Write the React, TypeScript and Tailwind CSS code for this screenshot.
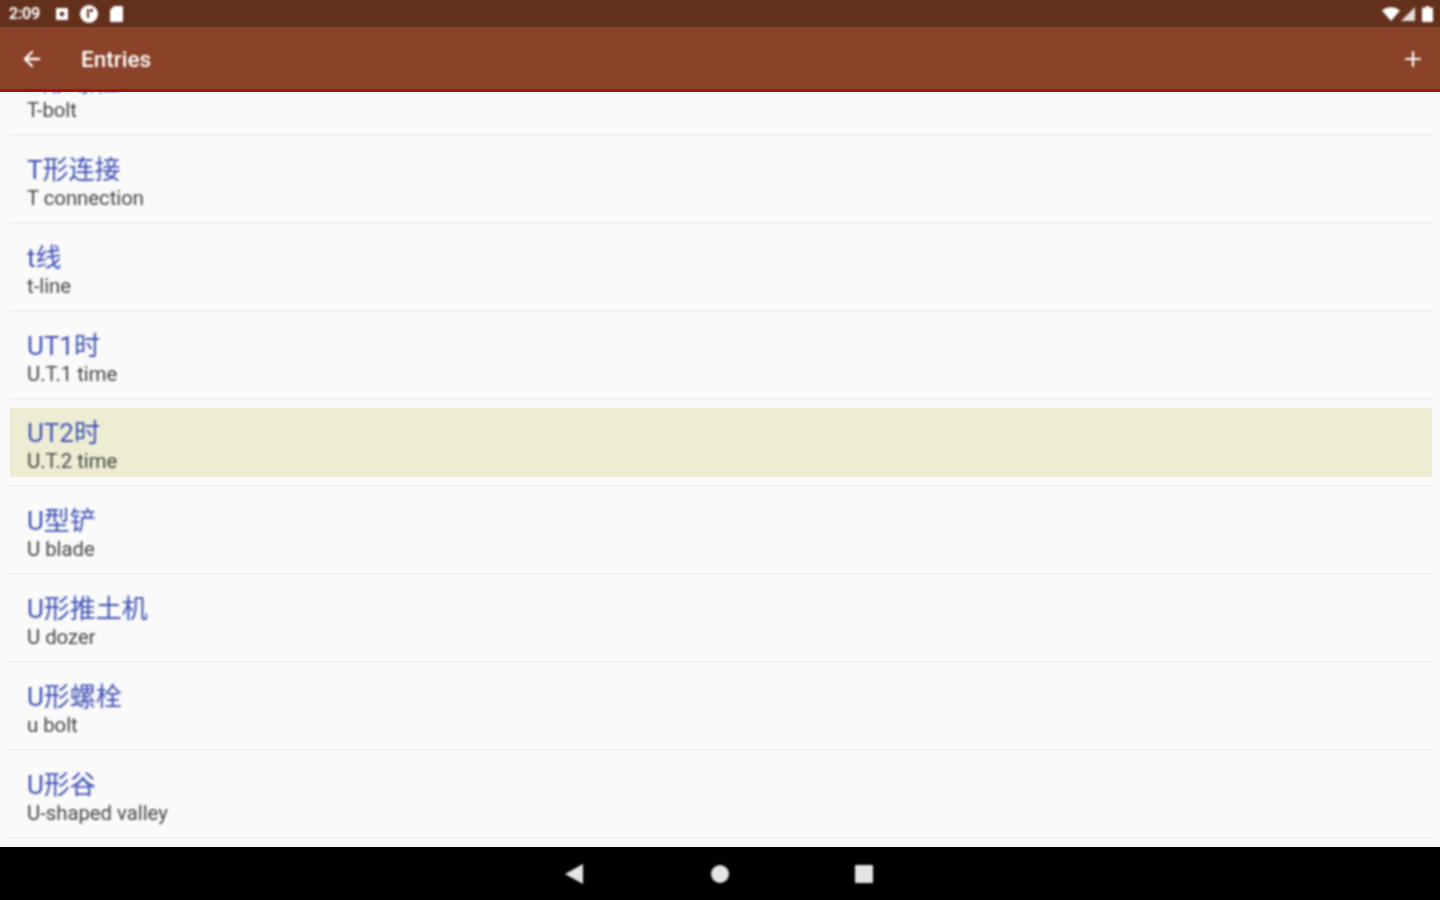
import React from "react";
import { ArrowLeft, Plus } from "lucide-react";

const ENTRIES = [
  { title: "T形螺栓", sub: "T-bolt" },
  { title: "T形连接", sub: "T connection" },
  { title: "t线", sub: "t-line" },
  { title: "UT1时", sub: "U.T.1 time" },
  { title: "UT2时", sub: "U.T.2 time", active: true },
  { title: "U型铲", sub: "U blade" },
  { title: "U形推土机", sub: "U dozer" },
  { title: "U形螺栓", sub: "u bolt" },
  { title: "U形谷", sub: "U-shaped valley" },
];

const StatusBar = () => (
  <div className="flex h-[27px] shrink-0 items-center justify-between bg-[#63301c] pl-[9px] pr-[7px] text-white">
    <div className="flex items-center blur-[0.8px]">
      <span className="w-[32px] text-[16px] font-bold tracking-[-0.3px]">2:09</span>
      <svg width="12" height="12" viewBox="0 0 12 12" className="ml-[15px]">
        <path fillRule="evenodd" d="M1 0h10a1 1 0 0 1 1 1v10a1 1 0 0 1-1 1H1a1 1 0 0 1-1-1V1a1 1 0 0 1 1-1zM4 4v4h4V4z" fill="#fff" />
      </svg>
      <svg width="18" height="18" viewBox="0 0 18 18" className="ml-[12px]">
        <circle cx="9" cy="9" r="9" fill="#fff" />
        <path d="M7 4h2v9H7zM10 4h3v3h-3z" fill="#63301c" />
      </svg>
      <svg width="13" height="16" viewBox="0 0 13 16" className="ml-[12px]">
        <path d="M4 0h8a1 1 0 0 1 1 1v14a1 1 0 0 1-1 1H1a1 1 0 0 1-1-1V4z" fill="#fff" />
      </svg>
    </div>
    <div className="flex items-center blur-[0.8px]">
      <svg width="18" height="14" viewBox="0 0 18 14">
        <path d="M0 3.5C5 -1 13 -1 18 3.5L9 14z" fill="#fff" />
      </svg>
      <svg width="14" height="14" viewBox="0 0 14 14" className="ml-[1px]">
        <path d="M14 0v14H0z" fill="#e4dcd8" />
      </svg>
      <svg width="11" height="16" viewBox="0 0 11 16" className="ml-[7px]">
        <path d="M4 0h3v1.500h3a1 1 0 0 1 1 1V15a1 1 0 0 1-1 1H1a1 1 0 0 1-1-1V2.500a1 1 0 0 1 1-1h3z" fill="#fff" />
      </svg>
    </div>
  </div>
);

const AppBar = () => (
  <div className="z-10 flex h-[65px] shrink-0 items-center justify-between border-b-[3px] border-[#a5120c] bg-[#8a4228] pl-[20px] pr-[15px] pt-[2px] text-white">
    <div className="flex items-center blur-[0.8px]">
      <ArrowLeft size={24} strokeWidth={2.4} />
      <span className="ml-[37px] pt-[2px] text-[22.5px] font-medium">Entries</span>
    </div>
    <Plus size={24} strokeWidth={2.2} className="blur-[0.8px]" />
  </div>
);

const Row = ({ title, sub, active }: { title: string; sub: string; active?: boolean }) => (
  <div className="border-b-2 border-[#f1f1f1] py-[8px]">
    <div className={`flex h-[69.875px] flex-col justify-center px-[17px] pt-[6px] ${active ? "bg-[#eeedd4]" : ""}`}>
      <div className="text-[26px] leading-[32px] text-[#3f51b5] blur-[0.8px]">{title}</div>
      <div className="text-[20.3px] leading-[24px] text-[#444] blur-[0.8px]">{sub}</div>
    </div>
  </div>
);

const NavBar = () => (
  <div className="flex h-[53px] shrink-0 items-center justify-center bg-black">
    <svg width="18" height="20" viewBox="0 0 18 20" className="-ml-[2px] blur-[0.8px]">
      <path d="M18 0v20L0 10z" fill="#e4e4e4" />
    </svg>
    <div className="ml-[128px] size-[18px] rounded-full bg-[#e4e4e4] blur-[0.8px]" />
    <div className="ml-[126px] size-[18px] rounded-[1px] bg-[#e4e4e4] blur-[0.8px]" />
  </div>
);

export default function App() {
  return (
    <div className="flex h-[900px] w-[1440px] flex-col overflow-hidden bg-white font-['Roboto','Noto_Sans_CJK_SC',sans-serif]">
      <StatusBar />
      <AppBar />
      <div className="flex-1 overflow-hidden bg-[#fafafa] pl-[10px] pr-[8px]">
        <div className="-mt-[44px]">
          {ENTRIES.map((e) => (
            <Row key={e.title} {...e} />
          ))}
        </div>
      </div>
      <NavBar />
    </div>
  );
}
